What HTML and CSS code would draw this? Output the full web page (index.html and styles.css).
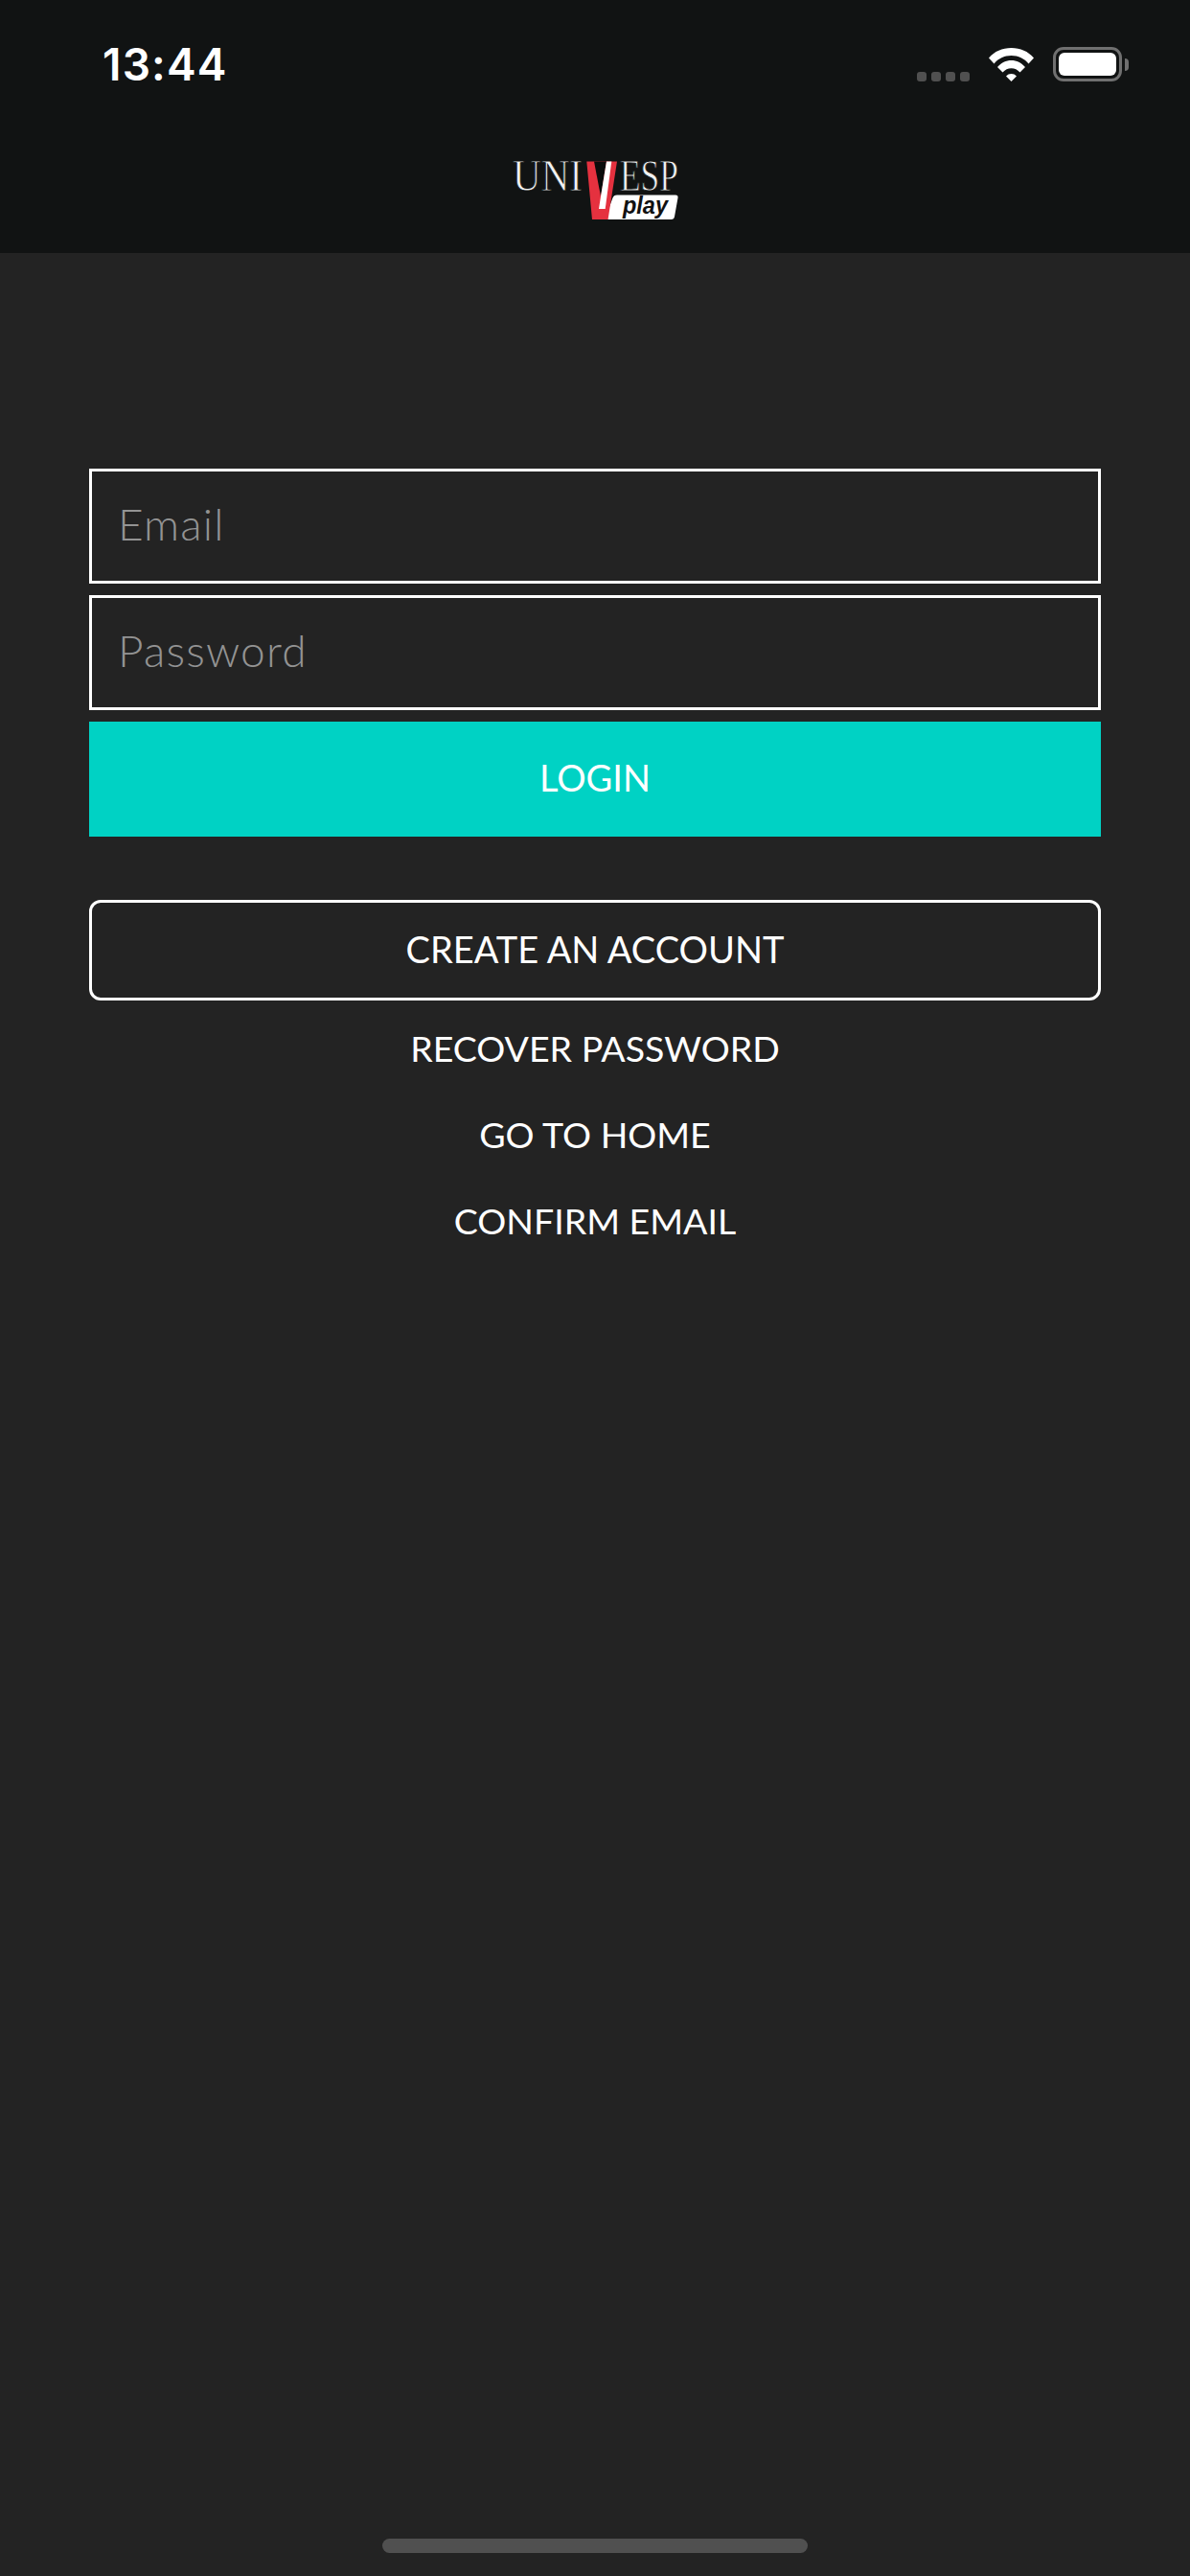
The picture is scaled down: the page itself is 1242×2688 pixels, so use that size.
FILE: index.html
```html
<!DOCTYPE html>
<html lang="en">
<head>
<meta charset="utf-8">
<title>Univesp Play</title>
<link rel="stylesheet" href="styles.css">
</head>
<body>
<div class="screen">
  <header class="top">
    <div class="status">
      <span class="time">13:44</span>
      <div class="status-icons">
        <div class="signal"><i></i><i></i><i></i><i></i></div>
        <svg class="wifi" viewBox="0 0 47 35" aria-hidden="true">
          <path d="M0 10.500C6 3.500 14 0 23.500 0S41 3.500 47 10.500L41.500 16.500C37 11 31 8 23.500 8S10 11 5.500 16.500Z"/>
          <path d="M9 20C13 15.500 18 13 23.500 13S34 15.500 38 20L32.500 25.500C30 22.800 27 21.300 23.500 21.300S17 22.800 14.500 25.500Z"/>
          <path d="M18 29.500C19.500 27.800 21.500 27 23.500 27S27.500 27.800 29 29.500L23.500 35Z"/>
        </svg>
        <div class="battery"><div class="battery-shell"><div class="battery-level"></div></div><div class="battery-nub"></div></div>
      </div>
    </div>
    <div class="brand">
      <svg class="logo" viewBox="0 0 180 68" role="img" aria-label="Univesp Play">
        <text class="logo-serif" x="4" y="34" textLength="73" lengthAdjust="spacingAndGlyphs">UNI</text>
        <text class="logo-serif" x="116" y="34" textLength="61" lengthAdjust="spacingAndGlyphs">ESP</text>
        <path class="logo-badge" d="M113 38.500H174Q177 38.500 176.500 41.500L173 61Q172.500 64 169.500 64H100L108.500 41.500Q109.500 38.500 113 38.500Z"/>
        <path class="logo-red" d="M81.300 3.500H113L103.600 64H87Z"/>
        <path class="logo-black" d="M89 3.500H102L96 40Z"/>
        <path class="logo-white" d="M102 3.500H107.300L100.700 53H94L96 40Z"/>
        <text class="logo-play" x="119" y="58.300" textLength="47" lengthAdjust="spacingAndGlyphs">play</text>
      </svg>
    </div>
  </header>
  <main class="content">
    <form class="login-form">
      <input class="field" type="text" placeholder="Email">
      <input class="field" type="password" placeholder="Password">
      <button class="btn-primary" type="button">LOGIN</button>
    </form>
    <nav class="actions">
      <a class="btn-outline" href="#">CREATE AN ACCOUNT</a>
      <a class="link" href="#">RECOVER PASSWORD</a>
      <a class="link" href="#">GO TO HOME</a>
      <a class="link" href="#">CONFIRM EMAIL</a>
    </nav>
  </main>
  <div class="home-area"><div class="home-bar"></div></div>
</div>
</body>
</html>
```
FILE: styles.css
```css
* { box-sizing: border-box; }
html, body { margin: 0; padding: 0; }
body { background: #232323; color: #fff; font-family: "Lato", "Liberation Sans", sans-serif; }
.screen { width: 1242px; height: 2688px; display: flex; flex-direction: column; overflow: hidden; background: #232323; }

.top { height: 264px; background: #111313; flex: none; }
.status { height: 133px; padding: 0 64px 0 107px; display: flex; justify-content: space-between; align-items: flex-start; }
.time { margin-top: 41px; font: 600 46px/52px "Inter", "Liberation Sans", sans-serif; letter-spacing: 1.200px; }
.status-icons { display: flex; align-items: flex-start; margin-top: 49px; }
.signal { display: flex; gap: 5px; margin-top: 26px; margin-right: 20px; }
.signal i { width: 10px; height: 10px; border-radius: 3px; background: #505050; display: block; }
.wifi { width: 47px; height: 35px; fill: #fff; margin-top: 1px; margin-right: 20px; display: block; }
.battery { display: flex; align-items: center; }
.battery-shell { width: 72px; height: 36px; border: 3px solid #707070; border-radius: 11px; padding: 3px; }
.battery-level { width: 100%; height: 100%; background: #fff; border-radius: 6px; }
.battery-nub { width: 4px; height: 13px; margin-left: 3px; background: #707070; border-radius: 0 4px 4px 0; }

.brand { display: flex; justify-content: center; }
.logo { width: 180px; height: 68px; display: block; margin-top: 32px; overflow: visible; }
.logo-serif { font: 400 47px "Liberation Serif", serif; fill: #f2f2f2; stroke: #111313; stroke-width: 0.9px; }
.logo-red { fill: #e5313f; }
.logo-black { fill: #0b0b0b; }
.logo-white { fill: #fff; }
.logo-badge { fill: #fff; }
.logo-play { font: italic 700 26px "Liberation Sans", sans-serif; fill: #111; }

.content { flex: 1; padding: 225px 93px 0; }
.login-form { display: flex; flex-direction: column; gap: 12px; }
.field { width: 100%; height: 120px; background: #232323; border: 3px solid #fff; border-radius: 0; padding: 0 28px 6px 27px; font: 300 46px "Lato", sans-serif; letter-spacing: 1.200px; color: #fff; outline: none; }
.field::placeholder { color: #939393; opacity: 1; }
.btn-primary { height: 120px; border: 0; background: #00d2c4; color: #fff; font: 400 38px "Lato", sans-serif; padding: 0 0 4px; }
.actions { margin-top: 66px; display: flex; flex-direction: column; align-items: center; }
.btn-outline { width: 100%; height: 105px; border: 3px solid #fff; border-radius: 12px; padding-bottom: 4px; display: flex; align-items: center; justify-content: center; color: #fff; text-decoration: none; font-size: 38px; }
.link { height: 90px; padding-bottom: 7px; display: flex; align-items: center; color: #fff; text-decoration: none; font-size: 37.500px; }
.btn-outline + .link { margin-top: 8px; }

.home-area { flex: none; padding-bottom: 24px; display: flex; justify-content: center; }
.home-bar { width: 444px; height: 15px; border-radius: 8px; background: #505050; }
```
